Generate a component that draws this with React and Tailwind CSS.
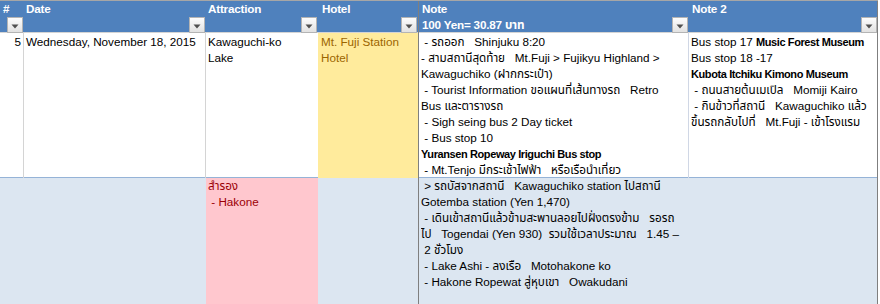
import React from 'react'

function FilterButton() {
    return (
        <div className="w-4 h-4 border border-[#b4b4b4] bg-gradient-to-b from-[#fdfdfd] to-[#e2e2e2] flex items-center justify-center">
            <svg width="8" height="5" viewBox="0 0 8 5" className="mt-[2px]">
                <polygon points="0.5,0.5 7.5,0.5 4,4.5" fill="#505050" />
            </svg>
        </div>
    )
}

function HeadCell({ title, sub, className = '', pad = 'pl-[2px]' }) {
    return (
        <div className={`flex flex-col h-full ${className}`}>
            <div className={`${pad} font-bold text-white leading-4 whitespace-nowrap tracking-[-0.2px]`}>{title}</div>
            <div className="flex items-end justify-between flex-1">
                <div className={`${pad} font-bold text-white leading-4 whitespace-nowrap tracking-[-0.2px]`}>{sub}</div>
                <FilterButton />
            </div>
        </div>
    )
}

function Lines({ lines }) {
    return lines.map((l, i) => (
        <div key={i} className="whitespace-pre leading-4 overflow-hidden">{l}</div>
    ))
}

// bold runs are narrower in the original font
function B({ children }) {
    return <b className="text-[11px] tracking-[-0.4px]">{children}</b>
}

const note1 = [
    ' - รถออก   Shinjuku 8:20',
    '- สามสถานีสุดท้าย   Mt.Fuji > Fujikyu Highland >',
    'Kawaguchiko (ฝากกระเป๋า)',
    ' - Tourist Information ขอแผนที่เส้นทางรถ   Retro',
    'Bus และตารางรถ',
    ' - Sigh seing bus 2 Day ticket',
    ' - Bus stop 10',
    <B key="b">Yuransen Ropeway Iriguchi Bus stop</B>,
    ' - Mt.Tenjo มีกระเช้าไฟฟ้า   หรือเรือนำเที่ยว',
]

const note2 = [
    <>Bus stop 17 <B>Music Forest Museum</B></>,
    'Bus stop 18 -17',
    <B key="k">Kubota Itchiku Kimono Museum</B>,
    ' - ถนนสายต้นเมเปิล   Momiji Kairo',
    ' - กินข้าวที่สถานี   Kawaguchiko แล้ว',
    'ขึ้นรถกลับไปที่   Mt.Fuji - เข้าโรงแรม',
]

const noteRow2 = [
    ' > รถบัสจากสถานี   Kawaguchiko station ไปสถานี',
    'Gotemba station (Yen 1,470)',
    ' - เดินเข้าสถานีแล้วข้ามสะพานลอยไปฝั่งตรงข้าม   รอรถ',
    'ไป   Togendai (Yen 930)  รวมใช้เวลาประมาณ   1.45 –',
    ' 2 ชั่วโมง',
    ' - Lake Ashi - ลงเรือ   Motohakone ko',
    ' - Hakone Ropewat สู่หุบเขา   Owakudani',
]

const cols = 'grid grid-cols-[24px_182px_112px_100px_271px_189px]'

export default function App() {
    return (
        <div className="w-[880px] h-[304px] overflow-hidden bg-white text-[11.7px] text-black font-['Liberation_Sans','Noto_Sans_Thai','DejaVu_Sans',sans-serif]">
            <div className="w-[878px] border-t border-[#a6a6a6]">
                {/* header */}
                <div className={`${cols} h-[31px] bg-[#4f81bd]`}>
                    <HeadCell title="#" pad="pl-[3px]" className="pr-[1px]" />
                    <HeadCell title="Date" className="pr-[1px]" />
                    <HeadCell title="Attraction" className="pr-[1px]" />
                    <HeadCell title="Hotel" pad="pl-[4px]" className="pr-[1px]" />
                    <HeadCell title="Note" sub="100 Yen= 30.87 บาท" pad="pl-[3px]" className="border-l border-[#7f7f7f] pr-[1px]" />
                    <HeadCell title="Note 2" pad="pl-[3px]" className="border-r border-[#7f7f7f]" />
                </div>

                {/* row 1 */}
                <div className={`${cols} h-[146px] border-t border-[#d4d4d4] border-b border-b-[#95b3d7]`}>
                    <div className="border-r border-[#d4d4d4] text-right pr-[2px] pt-[1px] leading-4">5</div>
                    <div className="border-r border-[#d4d4d4] pl-[2px] pt-[1px] leading-4 whitespace-nowrap">Wednesday, November 18, 2015</div>
                    <div className="pl-[2px] pt-[1px]">
                        <Lines lines={['Kawaguchi-ko', 'Lake']} />
                    </div>
                    <div className="bg-[#ffeb9c] text-[#9c6500] pl-[3px] pt-[1px]">
                        <Lines lines={['Mt. Fuji Station', 'Hotel']} />
                    </div>
                    <div className="border-l border-[#7f7f7f] border-r border-r-[#d0d7e5] pl-[2px] pt-[1px]">
                        <Lines lines={note1} />
                    </div>
                    <div className="border-r border-[#7f7f7f] pl-[2px] pt-[1px]">
                        <Lines lines={note2} />
                    </div>
                </div>

                {/* row 2 */}
                <div className={`${cols} h-[126px] bg-[#dce6f1]`}>
                    <div />
                    <div />
                    <div className="bg-[#ffc7ce] text-[#9c0006] pl-[2px]">
                        <Lines lines={['สำรอง', ' - Hakone']} />
                    </div>
                    <div />
                    <div className="border-l border-[#7f7f7f] pl-[2px] col-span-2 border-r border-r-[#7f7f7f]">
                        <Lines lines={noteRow2} />
                    </div>
                </div>
            </div>
        </div>
    )
}
